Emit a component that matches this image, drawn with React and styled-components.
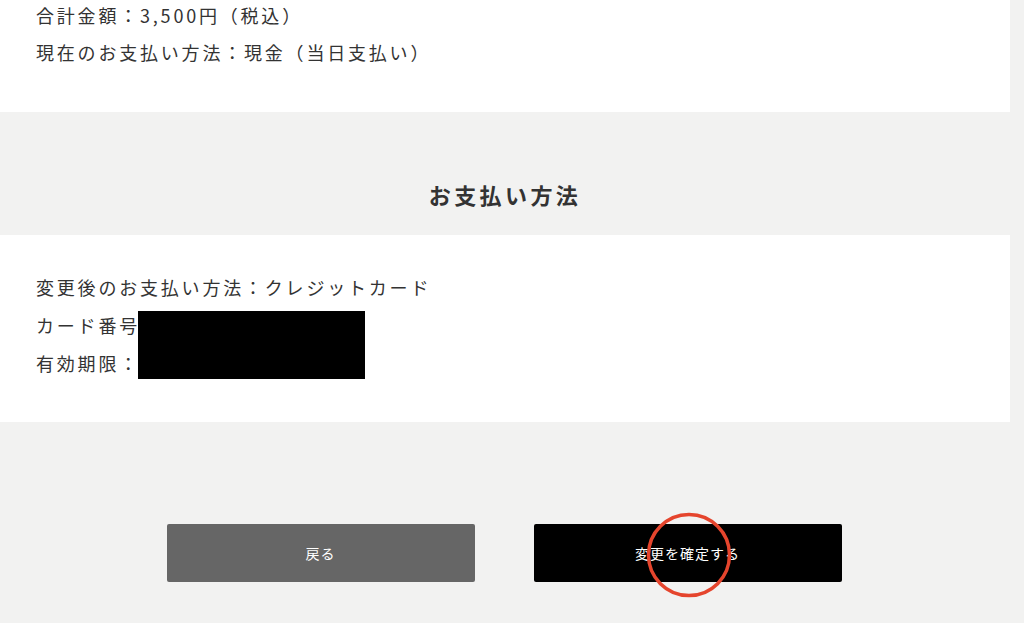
import React from "react";
import styled, { createGlobalStyle } from "styled-components";

const Global = createGlobalStyle`
  html, body { margin: 0; padding: 0; background: #f2f2f1; }
  body { font-family: "Noto Sans CJK JP", "Noto Sans", sans-serif; color: #333; overflow: hidden; }
`;

const Page = styled.div`
  width: 1010px;
  min-height: 623px;
  position: relative;
`;

const Panel = styled.section`
  background: #fff;
  padding: ${(p) => p.$pad};
`;

const Rows = styled.div`
  position: relative;
  display: flex;
  flex-direction: column;
  gap: ${(p) => p.$gap || 0}px;
`;

const Row = styled.div`
  font-size: 18px;
  letter-spacing: 2.8px;
  line-height: ${(p) => p.$lh}px;
  white-space: nowrap;
`;

const Redaction = styled.div`
  position: absolute;
  left: 102px;
  top: 43px;
  width: 227px;
  height: 68px;
  background: #000;
`;

const Band = styled.div`
  padding: 67px 0 26px;
  display: flex;
  justify-content: center;
`;

const Heading = styled.h2`
  margin: 0;
  font-size: 22px;
  font-weight: 700;
  letter-spacing: 3.4px;
  line-height: 30px;
  color: #333;
`;

const Actions = styled.div`
  padding-top: 102px;
  padding-right: 2px;
  display: flex;
  justify-content: center;
  gap: 59px;
`;

const Button = styled.button`
  width: 308px;
  height: 58px;
  border: none;
  border-radius: 2px;
  background: ${(p) => (p.$primary ? "#000" : "#666")};
  color: #fff;
  font-family: "Noto Sans CJK JP", sans-serif;
  font-size: 14px;
  letter-spacing: 1px;
  cursor: pointer;
`;

const Mark = styled.svg`
  position: absolute;
  left: 645px;
  top: 510px;
  z-index: 2;
  overflow: visible;
  pointer-events: none;
`;

export default function App() {
  return (
    <Page>
      <Global />
      <Panel $pad="0 0 45px 36px">
        <Rows $gap={7}>
          <Row $lh={30}>合計金額：3,500円（税込）</Row>
          <Row $lh={30}>現在のお支払い方法：現金（当日支払い）</Row>
        </Rows>
      </Panel>
      <Band>
        <Heading>お支払い方法</Heading>
      </Band>
      <Panel $pad="33px 0 40px 36px">
        <Rows>
          <Row $lh={38}>変更後のお支払い方法：クレジットカード</Row>
          <Row $lh={38}>カード番号</Row>
          <Row $lh={38}>有効期限：</Row>
          <Redaction />
        </Rows>
      </Panel>
      <Actions>
        <Button>戻る</Button>
        <Button $primary>変更を確定する</Button>
      </Actions>
      <Mark width="90" height="90" viewBox="0 0 90 90">
        <circle cx="44" cy="45" r="40.5" fill="none" stroke="#e5452d" strokeWidth="3.5" />
      </Mark>
    </Page>
  );
}
